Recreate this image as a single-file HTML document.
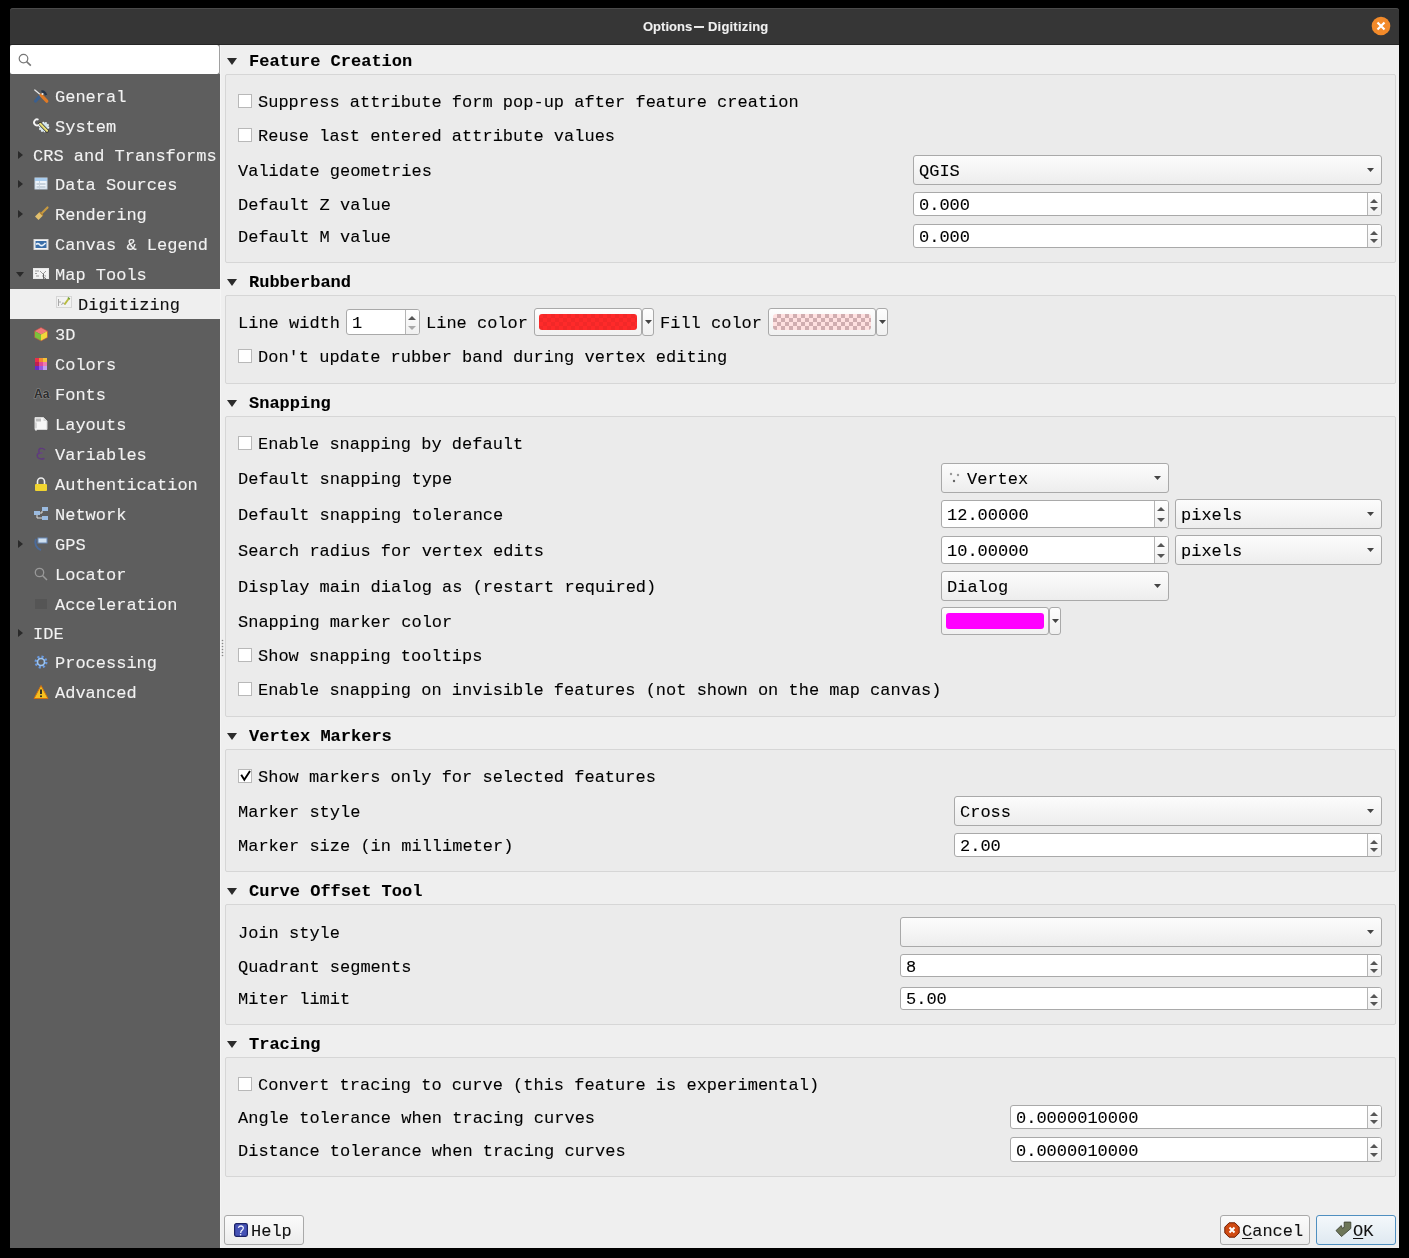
<!DOCTYPE html>
<html><head><meta charset="utf-8"><title>Options — Digitizing</title>
<style>
html,body{margin:0;padding:0;}
body{width:1409px;height:1258px;background:#000;position:relative;overflow:hidden;font-family:"Liberation Mono", monospace;font-size:17px;}
.r,.t,.a,.cb,.fr,.co,.sp,.cbtn,.sw,.btn{position:absolute;}
.t{white-space:pre;line-height:20px;height:20px;will-change:transform;-webkit-text-stroke:0.1px currentColor;}
.a{overflow:visible;}
.cb{width:12px;height:12px;background:#fff;border:1px solid #b8b8b8;}
.fr{box-sizing:border-box;border:1px solid #d6d6d6;background:#ebebeb;border-radius:2px;}
.co{box-sizing:border-box;border:1px solid #a9a9a9;border-radius:3px;background:linear-gradient(#fcfcfc,#ededed);}
.sp{box-sizing:border-box;border:1px solid #a9a9a9;border-radius:3px;background:#fff;}
.sb{position:absolute;right:0;top:0;width:13px;border-left:1px solid #b5b5b5;background:linear-gradient(#fff,#f0f0f0);border-radius:0 2px 2px 0;}
.cbtn{box-sizing:border-box;border:1px solid #a9a9a9;border-radius:3px;background:linear-gradient(#fdfdfd,#f0f0f0);}
.sw{border-radius:3px;}
.btn{box-sizing:border-box;border:1px solid #a9a9a9;border-radius:3px;background:linear-gradient(#fbfbfb,#ececec);}
u{text-underline-offset:2px;}
.btn.def{border-color:#4f8fc0;background:linear-gradient(#f4f8fb,#dfe9f1);}
</style></head><body>
<div class="r" style="left:10px;top:8px;width:1389px;height:37px;background:#363636;border-radius:3px 3px 0 0;box-shadow:inset 0 1px 0 #4a4a4a"></div>
<div class="r" style="left:10px;top:44px;width:1389px;height:1px;background:#262626"></div>
<div class="t" style="left:643px;top:17px;color:#f0f0f0;font-family:'Liberation Sans',sans-serif;font-weight:bold;font-size:13px">Options</div>
<div class="r" style="left:694px;top:26px;width:10px;height:1.6px;background:#e8e8e8"></div>
<div class="t" style="left:708px;top:17px;color:#f0f0f0;font-family:'Liberation Sans',sans-serif;font-weight:bold;font-size:13px;letter-spacing:0.2px">Digitizing</div>
<svg class="a" style="left:1371px;top:16px" width="20" height="20"><circle cx="10" cy="10" r="9.3" fill="#f28a2a"/><path d="M6.5 6.5 L13.5 13.5 M13.5 6.5 L6.5 13.5" stroke="#fff" stroke-width="2.2"/></svg>
<div class="r" style="left:10px;top:45px;width:210px;height:1203px;background:#5e5e5e"></div>
<div class="r" style="left:220px;top:45px;width:1179px;height:1203px;background:#efefef"></div>
<div class="r" style="left:220px;top:45px;width:1px;height:1203px;background:#f5f5f5"></div>
<svg class="a" style="left:221px;top:639px" width="3" height="19"><circle cx="1.5" cy="1.5" r="0.8" fill="#888"/><circle cx="1.5" cy="4.5" r="0.8" fill="#888"/><circle cx="1.5" cy="7.5" r="0.8" fill="#888"/><circle cx="1.5" cy="10.5" r="0.8" fill="#888"/><circle cx="1.5" cy="13.5" r="0.8" fill="#888"/><circle cx="1.5" cy="16.5" r="0.8" fill="#888"/></svg>
<div class="r" style="left:10px;top:45px;width:209px;height:29px;background:#fff;border-radius:2px"></div>
<div class="r" style="left:219px;top:45px;width:1px;height:29px;background:#a0a0a0"></div>
<svg class="a" style="left:17px;top:52px" width="16" height="16" viewBox="0 0 16 16"><circle cx="6.5" cy="6.6" r="4.3" stroke="#777" stroke-width="1.2" fill="none"/><path d="M9.6 9.7 L13.8 13.6" stroke="#777" stroke-width="1.6"/></svg>
<svg class="a" style="left:33px;top:88.0px" width="16" height="16" viewBox="0 0 16 16"><path d="M1.8 2 L7.5 6.7" stroke="#e8e8e8" stroke-width="1.3" stroke-linecap="round"/><path d="M2.4 13.2 L7 8" stroke="#3a5f8f" stroke-width="3" stroke-linecap="round"/><path d="M8 7.2 L13.8 13.2" stroke="#e07a25" stroke-width="3.2" stroke-linecap="round"/><path d="M8 2.5 Q12 1.2 14.2 6.8 L12.2 7.6 Q11 4.8 8.8 4.6 Z" fill="#26354a"/><circle cx="9.5" cy="6" r="1" fill="#eee"/></svg>
<div class="t" style="left:54.8px;top:88.0px;color:#f2f2f2;">General</div>
<svg class="a" style="left:33px;top:118.0px" width="16" height="16" viewBox="0 0 16 16"><circle cx="11" cy="9" r="4.6" fill="#cfe3ee" stroke="#eef6fa" stroke-width="1.4" stroke-dasharray="1.6 1.2"/><path d="M7.2 5.8 L14 12.8" stroke="#2a2a2a" stroke-width="3.6" stroke-linecap="round"/><path d="M7.2 5.8 L14 12.8" stroke="#e6de7a" stroke-width="2.2" stroke-linecap="round"/><path d="M5.5 1.8 A3 3 0 1 0 6.2 6.5" stroke="#f4f4f4" stroke-width="1.8" fill="none"/></svg>
<div class="t" style="left:54.8px;top:118.0px;color:#f2f2f2;">System</div>
<svg class="a" style="left:17.5px;top:151.0px" width="5" height="8"><path d="M0 0 L5 4 L0 8 Z" fill="#2a2a2a"/></svg>
<div class="t" style="left:33px;top:147.0px;color:#f2f2f2;">CRS and Transforms</div>
<svg class="a" style="left:17.5px;top:180.0px" width="5" height="8"><path d="M0 0 L5 4 L0 8 Z" fill="#2a2a2a"/></svg>
<svg class="a" style="left:33px;top:176.0px" width="16" height="16" viewBox="0 0 16 16"><rect x="2" y="2" width="12" height="11" fill="#eef4fa" stroke="#c6d6e6" stroke-width="1"/><rect x="2" y="2" width="12" height="3" fill="#a9cdef"/><path d="M3.5 8 H12.5 M3.5 11 H12.5" stroke="#9fb0c0" stroke-width="1"/><path d="M6.5 5 V13" stroke="#c9d4de" stroke-width="1"/></svg>
<div class="t" style="left:54.8px;top:176.0px;color:#f2f2f2;">Data Sources</div>
<svg class="a" style="left:17.5px;top:210.0px" width="5" height="8"><path d="M0 0 L5 4 L0 8 Z" fill="#2a2a2a"/></svg>
<svg class="a" style="left:33px;top:206.0px" width="16" height="16" viewBox="0 0 16 16"><path d="M9 7 L14.5 1.5" stroke="#c89a40" stroke-width="2.2" stroke-linecap="round"/><path d="M2 10.5 L6.5 6 L10 9.5 L5.5 14 Z" fill="#e2c06e"/><path d="M6.5 6 L10 9.5" stroke="#b08030" stroke-width="1.2"/></svg>
<div class="t" style="left:54.8px;top:206.0px;color:#f2f2f2;">Rendering</div>
<svg class="a" style="left:33px;top:236.0px" width="16" height="16" viewBox="0 0 16 16"><rect x="1" y="3.5" width="14" height="10" fill="#f4f4f4" stroke="#d8d8d8" stroke-width="1"/><rect x="2.5" y="5" width="11" height="7" fill="#3a6ea8"/><path d="M3 8.5 Q5 6.5 7 9 Q9 11 12.5 7" stroke="#e8f0f8" stroke-width="1.6" fill="none"/></svg>
<div class="t" style="left:54.8px;top:236.0px;color:#f2f2f2;">Canvas &amp; Legend</div>
<svg class="a" style="left:15.5px;top:272.0px" width="8" height="5"><path d="M0 0 L8 0 L4 5 Z" fill="#2a2a2a"/></svg>
<svg class="a" style="left:33px;top:266.0px" width="16" height="16" viewBox="0 0 16 16"><rect x="0.5" y="2.5" width="15" height="10" fill="#f2f2f2" stroke="#e8e8e8" stroke-width="1"/><path d="M2 5 H6 M2 7.5 H4 M7 5 L10 8 L13 5 M3 10 H6 M9 10 H13" stroke="#9a9a9a" stroke-width="1" fill="none"/><path d="M10.5 8 L10.5 12.8 L11.8 11.6 L13 13.5" stroke="#555" stroke-width="0.9" fill="#fff"/></svg>
<div class="t" style="left:54.8px;top:266.0px;color:#f2f2f2;">Map Tools</div>
<div class="r" style="left:10px;top:289px;width:210px;height:30px;background:#efefef"></div>
<svg class="a" style="left:56px;top:296.0px" width="16" height="16" viewBox="0 0 16 16"><rect x="0.5" y="0.5" width="15" height="11" fill="#f2f2f2" stroke="#d6d6d6" stroke-width="1"/><path d="M2.5 3 V10 M2.5 6 H5 M5.5 9 L7 6.5 L8.5 8.5" stroke="#a8a8a8" stroke-width="1" fill="none"/><path d="M8.5 8.5 L12.8 2.5" stroke="#b8bc40" stroke-width="2"/><path d="M12 1.5 L13.8 3.2" stroke="#6a9a30" stroke-width="1.4"/></svg>
<div class="t" style="left:77.8px;top:296.0px;color:#111;">Digitizing</div>
<svg class="a" style="left:33px;top:326.0px" width="16" height="16" viewBox="0 0 16 16"><path d="M8 1.5 L14.5 5 L8 8.5 L1.5 5 Z" fill="#f07a7a"/><path d="M1.5 5 L8 8.5 L8 15 L1.5 11.5 Z" fill="#7cc23a"/><path d="M14.5 5 L8 8.5 L8 15 L14.5 11.5 Z" fill="#f0d83a"/><path d="M8 1.5 L14.5 5 L14.5 11.5 L8 15 L1.5 11.5 L1.5 5 Z" fill="none" stroke="#c04a40" stroke-width="0.6"/></svg>
<div class="t" style="left:54.8px;top:326.0px;color:#f2f2f2;">3D</div>
<svg class="a" style="left:33px;top:356.0px" width="16" height="16" viewBox="0 0 16 16"><rect x="2" y="2" width="4" height="4" fill="#e8304a"/><rect x="6" y="2" width="4" height="4" fill="#f08a30"/><rect x="10" y="2" width="4" height="4" fill="#f5c23a"/><rect x="2" y="6" width="4" height="4" fill="#c02050"/><rect x="6" y="6" width="4" height="4" fill="#e04a9a"/><rect x="10" y="6" width="4" height="4" fill="#f07ab0"/><rect x="2" y="10" width="4" height="4" fill="#6a2ac8"/><rect x="6" y="10" width="4" height="4" fill="#9a5ae0"/><rect x="10" y="10" width="4" height="4" fill="#c0a0f0"/></svg>
<div class="t" style="left:54.8px;top:356.0px;color:#f2f2f2;">Colors</div>
<svg class="a" style="left:33px;top:386.0px" width="16" height="16" viewBox="0 0 16 16"><text x="1" y="12.3" font-family="Liberation Sans" font-weight="bold" font-size="12" fill="#2e2e2e" stroke="#8a8a8a" stroke-width="1.2" paint-order="stroke">Aa</text></svg>
<div class="t" style="left:54.8px;top:386.0px;color:#f2f2f2;">Fonts</div>
<svg class="a" style="left:33px;top:416.0px" width="16" height="16" viewBox="0 0 16 16"><path d="M2 1.5 H10.5 L14 5 V13.5 H2 Z" fill="#f6f6f6" stroke="#d8d8d8" stroke-width="1"/><path d="M10.5 1.5 V5 H14" fill="#d8d8d8"/><rect x="3" y="2.5" width="5" height="3" fill="#bdbdbd"/><path d="M3 6.5 V12" stroke="#cfcfcf" stroke-width="1.5"/><rect x="2" y="12.5" width="2" height="2" fill="#e8e8e8"/></svg>
<div class="t" style="left:54.8px;top:416.0px;color:#f2f2f2;">Layouts</div>
<svg class="a" style="left:33px;top:446.0px" width="16" height="16" viewBox="0 0 16 16"><path d="M12 4 Q10 1.8 7.5 2.5 Q4.5 3.5 6.5 7 Q3.5 8 4.5 11 Q6 14 11.5 12.5" stroke="#5f3a7e" stroke-width="1.4" fill="none"/><path d="M6.5 7 H9.5" stroke="#6c3f8e" stroke-width="1.2"/></svg>
<div class="t" style="left:54.8px;top:446.0px;color:#f2f2f2;">Variables</div>
<svg class="a" style="left:33px;top:476.0px" width="16" height="16" viewBox="0 0 16 16"><path d="M4.5 8 V5.5 A3.5 3.5 0 0 1 11.5 5.5 V8" stroke="#eee" stroke-width="1.6" fill="none"/><rect x="2" y="8" width="12" height="7" rx="1" fill="#f0d430"/></svg>
<div class="t" style="left:54.8px;top:476.0px;color:#f2f2f2;">Authentication</div>
<svg class="a" style="left:33px;top:506.0px" width="16" height="16" viewBox="0 0 16 16"><rect x="1" y="5" width="6" height="4" fill="#9bbbe0"/><rect x="9" y="1" width="6" height="4" fill="#9bbbe0"/><rect x="9" y="10" width="6" height="4" fill="#9bbbe0"/><path d="M4 9 V12 H9 M7 7 H9 V5" stroke="#ddd" fill="none"/></svg>
<div class="t" style="left:54.8px;top:506.0px;color:#f2f2f2;">Network</div>
<svg class="a" style="left:17.5px;top:540.0px" width="5" height="8"><path d="M0 0 L5 4 L0 8 Z" fill="#2a2a2a"/></svg>
<svg class="a" style="left:33px;top:536.0px" width="16" height="16" viewBox="0 0 16 16"><path d="M3 3 A8 8 0 0 0 8 14" stroke="#4a6a9a" stroke-width="2" fill="none"/><rect x="5" y="2" width="9" height="5" fill="#cfe0f0" stroke="#6a8ab8"/></svg>
<div class="t" style="left:54.8px;top:536.0px;color:#f2f2f2;">GPS</div>
<svg class="a" style="left:33px;top:566.0px" width="16" height="16" viewBox="0 0 16 16"><circle cx="6.5" cy="6.5" r="4.2" stroke="#999" stroke-width="1.3" fill="none"/><path d="M9.5 9.5 L14 14" stroke="#999" stroke-width="1.5"/></svg>
<div class="t" style="left:54.8px;top:566.0px;color:#f2f2f2;">Locator</div>
<svg class="a" style="left:33px;top:596.0px" width="16" height="16" viewBox="0 0 16 16"><rect x="2" y="3" width="12" height="10" fill="#555"/></svg>
<div class="t" style="left:54.8px;top:596.0px;color:#f2f2f2;">Acceleration</div>
<svg class="a" style="left:17.5px;top:629.0px" width="5" height="8"><path d="M0 0 L5 4 L0 8 Z" fill="#2a2a2a"/></svg>
<div class="t" style="left:33px;top:625.0px;color:#f2f2f2;">IDE</div>
<svg class="a" style="left:33px;top:654.0px" width="16" height="16" viewBox="0 0 16 16"><circle cx="8" cy="8" r="5" fill="none" stroke="#6a9ae0" stroke-width="3" stroke-dasharray="2 1.9"/><circle cx="8" cy="8" r="3.5" fill="none" stroke="#9cc4f0" stroke-width="1.6"/></svg>
<div class="t" style="left:54.8px;top:654.0px;color:#f2f2f2;">Processing</div>
<svg class="a" style="left:33px;top:684.0px" width="16" height="16" viewBox="0 0 16 16"><path d="M8 1.5 L15 14.5 H1 Z" fill="#f5c020" stroke="#d07010" stroke-width="1"/><path d="M8 5.5 V10" stroke="#222" stroke-width="1.8"/><circle cx="8" cy="12.3" r="1" fill="#222"/></svg>
<div class="t" style="left:54.8px;top:684.0px;color:#f2f2f2;">Advanced</div>
<svg class="a" style="left:227px;top:58px" width="10" height="7"><path d="M0 0 L10 0 L5.0 7 Z" fill="#2b2b2b"/></svg>
<div class="t" style="left:249px;top:52.0px;color:#000;font-weight:bold;">Feature Creation</div>
<div class="fr" style="left:225px;top:74px;width:1171px;height:189px"></div>
<div class="cb" style="left:238px;top:94px"></div>
<div class="t" style="left:257.5px;top:93.0px;color:#000;">Suppress attribute form pop-up after feature creation</div>
<div class="cb" style="left:238px;top:128px"></div>
<div class="t" style="left:257.5px;top:127.0px;color:#000;">Reuse last entered attribute values</div>
<div class="t" style="left:238px;top:162.0px;color:#000;">Validate geometries</div>
<div class="co" style="left:913px;top:155px;width:469px;height:30px"></div>
<svg class="a" style="left:1367px;top:168.0px" width="7" height="4"><path d="M0 0 L7 0 L3.5 4 Z" fill="#444"/></svg>
<div class="t" style="left:919px;top:162.0px;color:#000;">QGIS</div>
<div class="t" style="left:238px;top:196.0px;color:#000;">Default Z value</div>
<div class="sp" style="left:913px;top:192px;width:469px;height:24px"><div class="sb" style="height:22px"></div></div>
<svg class="a" style="left:1370px;top:198.5px" width="8" height="4"><path d="M0 4 L8 4 L4 0 Z" fill="#555"/></svg>
<svg class="a" style="left:1370px;top:207px" width="8" height="4"><path d="M0 0 L8 0 L4 4 Z" fill="#555"/></svg>
<div class="t" style="left:919px;top:196.0px;color:#000;">0.000</div>
<div class="t" style="left:238px;top:228.0px;color:#000;">Default M value</div>
<div class="sp" style="left:913px;top:224px;width:469px;height:24px"><div class="sb" style="height:22px"></div></div>
<svg class="a" style="left:1370px;top:230.5px" width="8" height="4"><path d="M0 4 L8 4 L4 0 Z" fill="#555"/></svg>
<svg class="a" style="left:1370px;top:239px" width="8" height="4"><path d="M0 0 L8 0 L4 4 Z" fill="#555"/></svg>
<div class="t" style="left:919px;top:228.0px;color:#000;">0.000</div>
<svg class="a" style="left:227px;top:279px" width="10" height="7"><path d="M0 0 L10 0 L5.0 7 Z" fill="#2b2b2b"/></svg>
<div class="t" style="left:249px;top:273.0px;color:#000;font-weight:bold;">Rubberband</div>
<div class="fr" style="left:225px;top:295px;width:1171px;height:89px"></div>
<div class="t" style="left:238px;top:314.0px;color:#000;">Line width</div>
<div class="sp" style="left:346px;top:309px;width:74px;height:26px"><div class="sb" style="height:24px"></div></div>
<svg class="a" style="left:408px;top:315.5px" width="8" height="4"><path d="M0 4 L8 4 L4 0 Z" fill="#555"/></svg>
<svg class="a" style="left:408px;top:326px" width="8" height="4"><path d="M0 0 L8 0 L4 4 Z" fill="#aaa"/></svg>
<div class="t" style="left:352px;top:314.0px;color:#000;">1</div>
<div class="t" style="left:426px;top:314.0px;color:#000;">Line color</div>
<div class="cbtn" style="left:534px;top:308px;width:108px;height:28px"></div>
<div class="sw" style="left:539px;top:314px;width:98px;height:16px;background-color:#ff2a2a;background-image:linear-gradient(45deg,rgba(0,0,0,.05) 25%,transparent 25%,transparent 75%,rgba(0,0,0,.05) 75%),linear-gradient(45deg,rgba(0,0,0,.05) 25%,transparent 25%,transparent 75%,rgba(0,0,0,.05) 75%);background-size:8px 8px;background-position:0 0,4px 4px;"></div>
<div class="cbtn" style="left:642px;top:308px;width:12px;height:28px;border-radius:3px"></div>
<svg class="a" style="left:644.5px;top:320px" width="7" height="4"><path d="M0 0 L7 0 L3.5 4 Z" fill="#444"/></svg>
<div class="t" style="left:660px;top:314.0px;color:#000;">Fill color</div>
<div class="cbtn" style="left:768px;top:308px;width:108px;height:28px"></div>
<div class="sw" style="left:773px;top:314px;width:98px;height:16px;background-color:#fff;background-color:#ffe0e0;background-image:linear-gradient(45deg,#d0adb0 25%,transparent 25%,transparent 75%,#d0adb0 75%),linear-gradient(45deg,#d0adb0 25%,transparent 25%,transparent 75%,#d0adb0 75%);background-size:8px 8px;background-position:0 0,4px 4px;"></div>
<div class="cbtn" style="left:876px;top:308px;width:12px;height:28px;border-radius:3px"></div>
<svg class="a" style="left:878.5px;top:320px" width="7" height="4"><path d="M0 0 L7 0 L3.5 4 Z" fill="#444"/></svg>
<div class="cb" style="left:238px;top:349px"></div>
<div class="t" style="left:257.5px;top:348.0px;color:#000;">Don't update rubber band during vertex editing</div>
<svg class="a" style="left:227px;top:400px" width="10" height="7"><path d="M0 0 L10 0 L5.0 7 Z" fill="#2b2b2b"/></svg>
<div class="t" style="left:249px;top:394.0px;color:#000;font-weight:bold;">Snapping</div>
<div class="fr" style="left:225px;top:416px;width:1171px;height:301px"></div>
<div class="cb" style="left:238px;top:436px"></div>
<div class="t" style="left:257.5px;top:435.0px;color:#000;">Enable snapping by default</div>
<div class="t" style="left:238px;top:470.0px;color:#000;">Default snapping type</div>
<div class="co" style="left:941px;top:463px;width:228px;height:30px"></div>
<svg class="a" style="left:1154px;top:476.0px" width="7" height="4"><path d="M0 0 L7 0 L3.5 4 Z" fill="#444"/></svg>
<svg class="a" style="left:948px;top:471px" width="14" height="14"><circle cx="3" cy="3" r="1.2" fill="#999"/><circle cx="10" cy="4" r="1.2" fill="#999"/><circle cx="6" cy="10" r="1.2" fill="#666"/></svg>
<div class="t" style="left:967px;top:470.0px;color:#000;">Vertex</div>
<div class="t" style="left:238px;top:506.0px;color:#000;">Default snapping tolerance</div>
<div class="sp" style="left:941px;top:500px;width:228px;height:28px"><div class="sb" style="height:26px"></div></div>
<svg class="a" style="left:1157px;top:506.5px" width="8" height="4"><path d="M0 4 L8 4 L4 0 Z" fill="#555"/></svg>
<svg class="a" style="left:1157px;top:518px" width="8" height="4"><path d="M0 0 L8 0 L4 4 Z" fill="#555"/></svg>
<div class="t" style="left:947px;top:506.0px;color:#000;">12.00000</div>
<div class="co" style="left:1175px;top:499px;width:207px;height:30px"></div>
<svg class="a" style="left:1367px;top:512.0px" width="7" height="4"><path d="M0 0 L7 0 L3.5 4 Z" fill="#444"/></svg>
<div class="t" style="left:1181px;top:506.0px;color:#000;">pixels</div>
<div class="t" style="left:238px;top:542.0px;color:#000;">Search radius for vertex edits</div>
<div class="sp" style="left:941px;top:536px;width:228px;height:28px"><div class="sb" style="height:26px"></div></div>
<svg class="a" style="left:1157px;top:542.5px" width="8" height="4"><path d="M0 4 L8 4 L4 0 Z" fill="#555"/></svg>
<svg class="a" style="left:1157px;top:554px" width="8" height="4"><path d="M0 0 L8 0 L4 4 Z" fill="#555"/></svg>
<div class="t" style="left:947px;top:542.0px;color:#000;">10.00000</div>
<div class="co" style="left:1175px;top:535px;width:207px;height:30px"></div>
<svg class="a" style="left:1367px;top:548.0px" width="7" height="4"><path d="M0 0 L7 0 L3.5 4 Z" fill="#444"/></svg>
<div class="t" style="left:1181px;top:542.0px;color:#000;">pixels</div>
<div class="t" style="left:238px;top:578.0px;color:#000;">Display main dialog as (restart required)</div>
<div class="co" style="left:941px;top:571px;width:228px;height:30px"></div>
<svg class="a" style="left:1154px;top:584.0px" width="7" height="4"><path d="M0 0 L7 0 L3.5 4 Z" fill="#444"/></svg>
<div class="t" style="left:947px;top:578.0px;color:#000;">Dialog</div>
<div class="t" style="left:238px;top:613.0px;color:#000;">Snapping marker color</div>
<div class="cbtn" style="left:941px;top:607px;width:108px;height:28px"></div>
<div class="sw" style="left:946px;top:613px;width:98px;height:16px;background:#ff00ff;"></div>
<div class="cbtn" style="left:1049px;top:607px;width:12px;height:28px;border-radius:3px"></div>
<svg class="a" style="left:1051.5px;top:619px" width="7" height="4"><path d="M0 0 L7 0 L3.5 4 Z" fill="#444"/></svg>
<div class="cb" style="left:238px;top:648px"></div>
<div class="t" style="left:257.5px;top:647.0px;color:#000;">Show snapping tooltips</div>
<div class="cb" style="left:238px;top:682px"></div>
<div class="t" style="left:257.5px;top:681.0px;color:#000;">Enable snapping on invisible features (not shown on the map canvas)</div>
<svg class="a" style="left:227px;top:733px" width="10" height="7"><path d="M0 0 L10 0 L5.0 7 Z" fill="#2b2b2b"/></svg>
<div class="t" style="left:249px;top:727.0px;color:#000;font-weight:bold;">Vertex Markers</div>
<div class="fr" style="left:225px;top:749px;width:1171px;height:123px"></div>
<div class="cb" style="left:238px;top:769px"><svg width="14" height="14" style="position:absolute;left:-1px;top:-1px"><path d="M3.2 5.8 L6.3 10.8 L12 2" fill="none" stroke="#000" stroke-width="1.9"/></svg></div>
<div class="t" style="left:257.5px;top:768.0px;color:#000;">Show markers only for selected features</div>
<div class="t" style="left:238px;top:803.0px;color:#000;">Marker style</div>
<div class="co" style="left:954px;top:796px;width:428px;height:30px"></div>
<svg class="a" style="left:1367px;top:809.0px" width="7" height="4"><path d="M0 0 L7 0 L3.5 4 Z" fill="#444"/></svg>
<div class="t" style="left:960px;top:803.0px;color:#000;">Cross</div>
<div class="t" style="left:238px;top:837.0px;color:#000;">Marker size (in millimeter)</div>
<div class="sp" style="left:954px;top:833px;width:428px;height:24px"><div class="sb" style="height:22px"></div></div>
<svg class="a" style="left:1370px;top:839.5px" width="8" height="4"><path d="M0 4 L8 4 L4 0 Z" fill="#555"/></svg>
<svg class="a" style="left:1370px;top:848px" width="8" height="4"><path d="M0 0 L8 0 L4 4 Z" fill="#555"/></svg>
<div class="t" style="left:960px;top:837.0px;color:#000;">2.00</div>
<svg class="a" style="left:227px;top:888px" width="10" height="7"><path d="M0 0 L10 0 L5.0 7 Z" fill="#2b2b2b"/></svg>
<div class="t" style="left:249px;top:882.0px;color:#000;font-weight:bold;">Curve Offset Tool</div>
<div class="fr" style="left:225px;top:904px;width:1171px;height:121px"></div>
<div class="t" style="left:238px;top:924.0px;color:#000;">Join style</div>
<div class="co" style="left:900px;top:917px;width:482px;height:30px"></div>
<svg class="a" style="left:1367px;top:930.0px" width="7" height="4"><path d="M0 0 L7 0 L3.5 4 Z" fill="#444"/></svg>
<div class="t" style="left:906px;top:924.0px;color:#000;"></div>
<div class="t" style="left:238px;top:958.0px;color:#000;">Quadrant segments</div>
<div class="sp" style="left:900px;top:954px;width:482px;height:23px"><div class="sb" style="height:21px"></div></div>
<svg class="a" style="left:1370px;top:960.5px" width="8" height="4"><path d="M0 4 L8 4 L4 0 Z" fill="#555"/></svg>
<svg class="a" style="left:1370px;top:969px" width="8" height="4"><path d="M0 0 L8 0 L4 4 Z" fill="#555"/></svg>
<div class="t" style="left:906px;top:958.0px;color:#000;">8</div>
<div class="t" style="left:238px;top:990.0px;color:#000;">Miter limit</div>
<div class="sp" style="left:900px;top:987px;width:482px;height:23px"><div class="sb" style="height:21px"></div></div>
<svg class="a" style="left:1370px;top:993.5px" width="8" height="4"><path d="M0 4 L8 4 L4 0 Z" fill="#555"/></svg>
<svg class="a" style="left:1370px;top:1002px" width="8" height="4"><path d="M0 0 L8 0 L4 4 Z" fill="#555"/></svg>
<div class="t" style="left:906px;top:990.0px;color:#000;">5.00</div>
<svg class="a" style="left:227px;top:1041px" width="10" height="7"><path d="M0 0 L10 0 L5.0 7 Z" fill="#2b2b2b"/></svg>
<div class="t" style="left:249px;top:1035.0px;color:#000;font-weight:bold;">Tracing</div>
<div class="fr" style="left:225px;top:1057px;width:1171px;height:120px"></div>
<div class="cb" style="left:238px;top:1077px"></div>
<div class="t" style="left:257.5px;top:1076.0px;color:#000;">Convert tracing to curve (this feature is experimental)</div>
<div class="t" style="left:238px;top:1109.0px;color:#000;">Angle tolerance when tracing curves</div>
<div class="sp" style="left:1010px;top:1105px;width:372px;height:24px"><div class="sb" style="height:22px"></div></div>
<svg class="a" style="left:1370px;top:1111.5px" width="8" height="4"><path d="M0 4 L8 4 L4 0 Z" fill="#555"/></svg>
<svg class="a" style="left:1370px;top:1120px" width="8" height="4"><path d="M0 0 L8 0 L4 4 Z" fill="#555"/></svg>
<div class="t" style="left:1016px;top:1109.0px;color:#000;">0.0000010000</div>
<div class="t" style="left:238px;top:1142.0px;color:#000;">Distance tolerance when tracing curves</div>
<div class="sp" style="left:1010px;top:1137px;width:372px;height:25px"><div class="sb" style="height:23px"></div></div>
<svg class="a" style="left:1370px;top:1143.5px" width="8" height="4"><path d="M0 4 L8 4 L4 0 Z" fill="#555"/></svg>
<svg class="a" style="left:1370px;top:1153px" width="8" height="4"><path d="M0 0 L8 0 L4 4 Z" fill="#555"/></svg>
<div class="t" style="left:1016px;top:1142.0px;color:#000;">0.0000010000</div>
<div class="btn" style="left:224px;top:1215px;width:80px;height:30px"></div>
<svg class="a" style="left:234px;top:1223px" width="14" height="14" viewBox="0 0 14 14"><rect x="0.6" y="0.6" width="12.8" height="12.8" rx="1.8" fill="#4653b6" stroke="#1c2266" stroke-width="1.2"/><path d="M4.3 4.7 Q5.3 2.8 7.3 3 Q9.7 3.4 9.2 5.6 Q8.8 6.8 7.6 7.6 Q6.8 8.3 6.7 10" stroke="#f4f6ff" stroke-width="1.3" fill="none"/><circle cx="6.6" cy="11.8" r="0.8" fill="#f4f6ff"/></svg>
<div class="t" style="left:250.5px;top:1222.0px;color:#111">Help</div>
<div class="btn" style="left:1220px;top:1215px;width:90px;height:30px"></div>
<svg class="a" style="left:1224px;top:1222px" width="16" height="16" viewBox="0 0 16 16"><path d="M5.1 0.8 H10.9 L15.2 5.1 V10.9 L10.9 15.2 H5.1 L0.8 10.9 V5.1 Z" fill="#cf4a12" stroke="#6e1e04" stroke-width="1"/><path d="M5.5 5.5 L10.5 10.5 M10.5 5.5 L5.5 10.5" stroke="#fff" stroke-width="2"/></svg>
<div class="t" style="left:1242px;top:1222.0px;color:#111"><u>C</u>ancel</div>
<div class="btn def" style="left:1316px;top:1215px;width:80px;height:30px"></div>
<svg class="a" style="left:1335px;top:1221px" width="17" height="17" viewBox="0 0 17 17"><path d="M9.2 1.1 L15.8 1.1 L15.8 7.5 L8.5 13.8 L6.5 15.5 L1 9.6 L6.3 4.5 L7.3 7.3 L9.2 6.3 Z" fill="#6d7658" stroke="#3e4434" stroke-width="0.9" stroke-linejoin="round"/></svg>
<div class="t" style="left:1353px;top:1222.0px;color:#111"><u>O</u>K</div>
</body></html>
